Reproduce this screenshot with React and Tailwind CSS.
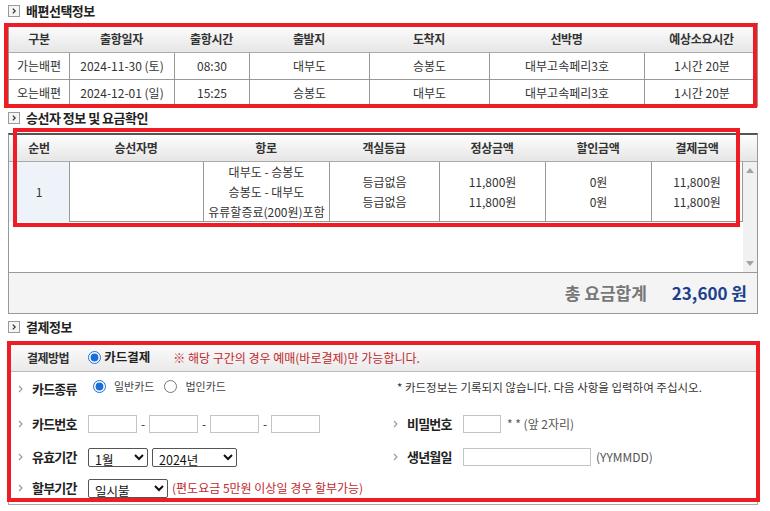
import React from 'react';

const trips = [
  ['가는배편', '2024-11-30 (토)', '08:30', '대부도', '승봉도', '대부고속페리3호', '1시간 20분'],
  ['오는배편', '2024-12-01 (일)', '15:25', '승봉도', '대부도', '대부고속페리3호', '1시간 20분'],
];

const tripHeads = ['구분', '출항일자', '출항시간', '출발지', '도착지', '선박명', '예상소요시간'];
const fareHeads = ['순번', '승선자명', '항로', '객실등급', '정상금액', '할인금액', '결제금액'];

function BoxIcon() {
  return (
    <svg width="12" height="12" viewBox="0 0 12 12">
      <rect x="0.5" y="0.5" width="11" height="11" fill="#f5f5f5" stroke="#9a9a9a" />
      <path d="M4.8 3.6 L7.2 6 L4.8 8.4" fill="none" stroke="#333" strokeWidth="1.2" />
    </svg>
  );
}

function SectionTitle({ children, className = '' }) {
  return (
    <div className={`flex items-center gap-[6px] pl-[8px] ${className}`}>
      <BoxIcon />
      <span className="text-[13px] font-bold text-[#222] tracking-[-0.5px]">{children}</span>
    </div>
  );
}

function RowMark() {
  return (
    <svg width="5" height="8" viewBox="0 0 5 8" className="shrink-0">
      <path d="M1 1 L4 4 L1 7" fill="none" stroke="#999" strokeWidth="1.1" />
    </svg>
  );
}

function Label({ children }) {
  return (
    <div className="flex items-center w-[70px] shrink-0">
      <RowMark />
      <span className="ml-[9px] text-[13px] font-bold text-[#222] tracking-[-0.8px]">{children}</span>
    </div>
  );
}

function TextBox({ w }) {
  return <input type="text" className={`${w} h-[18px] border border-[#c4c4c4] bg-white outline-none`} />;
}

function Select({ w, className = '', children }) {
  return (
    <select className={`${w} ${className} h-[19px] border border-[#555] rounded-[2px] bg-white text-[12.5px] leading-none py-0 pl-[2px] text-[#111]`}>
      <option>{children}</option>
    </select>
  );
}

export default function App() {
  return (
    <div className="relative w-[770px] h-[511px] overflow-hidden bg-white text-[#333] font-['Noto_Sans_CJK_KR','Noto_Sans',sans-serif]">
      {/* 배편선택정보 */}
      <SectionTitle className="h-[21px]">배편선택정보</SectionTitle>
      <div className="ml-[8px] mt-[2px] w-[750px] border-t-2 border-[#555] border-x border-x-[#999] text-[12px]">
        <div className="grid grid-cols-[60px_105px_75px_120px_120px_155px_115px] h-[28px] border-b border-[#aaa] bg-gradient-to-b from-[#fdfdfd] to-[#e6e6e6] font-bold">
          {tripHeads.map((h) => (
            <div key={h} className="flex items-center justify-center tracking-[-0.3px]">{h}</div>
          ))}
        </div>
        {trips.map((row) => (
          <div key={row[0]} className="grid grid-cols-[60px_105px_75px_120px_120px_155px_115px] h-[27px] border-b border-[#999]">
            {row.map((c, i) => (
              <div key={i} className={`flex items-center justify-center ${i > 0 ? 'border-l border-[#999]' : ''}`}>{c}</div>
            ))}
          </div>
        ))}
      </div>

      {/* 승선자 정보 및 요금확인 */}
      <SectionTitle className="h-[22px]">승선자 정보 및 요금확인</SectionTitle>
      <div className="ml-[8px] mt-[4px] w-[750px] border-t-2 border-[#555] border-x border-x-[#999] text-[12px]">
        <div className="grid grid-cols-[60px_134px_126px_110px_106px_106px_92px_16px] h-[27px] border-b border-[#aaa] bg-gradient-to-b from-[#fdfdfd] to-[#e6e6e6] font-bold">
          {fareHeads.map((h) => (
            <div key={h} className="flex items-center justify-center tracking-[-0.3px]">{h}</div>
          ))}
          <div />
        </div>
        <div className="flex h-[110px]">
          <div className="w-[734px]">
            <div className="grid grid-cols-[60px_134px_126px_110px_106px_106px_92px] h-[60px] border-b border-[#999] leading-[20px]">
              <div className="flex items-center justify-center bg-[#eef3fa]">1</div>
              <div className="border-l border-[#999]" />
              <div className="flex flex-col items-center justify-center border-l border-[#999]">
                <span>대부도 - 승봉도</span>
                <span>승봉도 - 대부도</span>
                <span>유류할증료(200원)포함</span>
              </div>
              <div className="flex flex-col items-center justify-center border-l border-[#999]">
                <span>등급없음</span>
                <span>등급없음</span>
              </div>
              <div className="flex flex-col items-center justify-center border-l border-[#999]">
                <span>11,800원</span>
                <span>11,800원</span>
              </div>
              <div className="flex flex-col items-center justify-center border-l border-[#999]">
                <span>0원</span>
                <span>0원</span>
              </div>
              <div className="flex flex-col items-center justify-center border-x border-[#999]">
                <span>11,800원</span>
                <span>11,800원</span>
              </div>
            </div>
          </div>
          {/* scrollbar */}
          <div className="w-[16px] bg-[#f1f1f1] flex flex-col justify-between items-center py-[6px]">
            <svg width="8" height="5" viewBox="0 0 8 5"><path d="M0 5 L4 0 L8 5 Z" fill="#a3a3a3" /></svg>
            <svg width="8" height="5" viewBox="0 0 8 5"><path d="M0 0 L4 5 L8 0 Z" fill="#a3a3a3" /></svg>
          </div>
        </div>
        <div className="flex items-center justify-end h-[42px] border-y border-[#999] bg-[#f4f4f4] pr-[10px] text-[17px] font-bold">
          <span className="text-[#777]">총 요금합계</span>
          <span className="ml-[25px] text-[#1d3f8f]">23,600 원</span>
        </div>
      </div>

      {/* 결제정보 */}
      <SectionTitle className="h-[26px]">결제정보</SectionTitle>
      <div className="ml-[8px] mt-[3px] w-[750px] border border-[#aaa] text-[12px]">
        <div className="flex items-center h-[28px] border-b border-[#bbb] bg-gradient-to-b from-[#fbfbfb] to-[#eaeaea] pl-[18px]">
          <span className="font-bold tracking-[-0.5px]">결제방법</span>
          <input type="radio" defaultChecked name="pay" className="ml-[19px] w-[13px] h-[13px] m-0 accent-[#1a6fd6]" />
          <span className="ml-[3px] text-[12.5px] font-bold text-[#222]">카드결제</span>
          <span className="ml-[23px] text-[#c0282d]">※ 해당 구간의 경우 예매(바로결제)만 가능합니다.</span>
        </div>

        <div className="flex h-[34px] items-center">
          <div className="flex items-center w-[376px] pl-[9px]">
            <Label>카드종류</Label>
            <input type="radio" defaultChecked name="ctype" className="ml-[5px] -mt-[5px] w-[13px] h-[13px] m-0 accent-[#1a6fd6]" />
            <span className="ml-[8px] -mt-[5px] text-[11px] text-[#444]">일반카드</span>
            <input type="radio" name="ctype" className="ml-[10px] -mt-[5px] w-[13px] h-[13px] m-0" />
            <span className="ml-[8px] -mt-[5px] text-[11px] text-[#444]">법인카드</span>
          </div>
          <div className="pl-[12px] -mt-[3px] text-[11.5px] text-[#333]">* 카드정보는 기록되지 않습니다. 다음 사항을 입력하여 주십시오.</div>
        </div>

        <div className="flex h-[36px] items-center">
          <div className="flex items-center w-[376px] pl-[9px]">
            <Label>카드번호</Label>
            <TextBox w="w-[49px]" />
            <span className="w-[12px] text-center">-</span>
            <TextBox w="w-[49px]" />
            <span className="w-[12px] text-center">-</span>
            <TextBox w="w-[49px]" />
            <span className="w-[12px] text-center">-</span>
            <TextBox w="w-[49px]" />
          </div>
          <div className="flex items-center pl-[8px]">
            <Label>비밀번호</Label>
            <TextBox w="w-[38px]" />
            <span className="ml-[6px] text-[#555]">* * (앞 2자리)</span>
          </div>
        </div>

        <div className="flex h-[30px] items-center">
          <div className="flex items-center w-[376px] pl-[9px]">
            <Label>유효기간</Label>
            <Select w="w-[60px]">1월</Select>
            <Select w="w-[85px]" className="ml-[4px]">2024년</Select>
          </div>
          <div className="flex items-center pl-[8px]">
            <Label>생년월일</Label>
            <TextBox w="w-[128px]" />
            <span className="ml-[5px] text-[#555]">(YYMMDD)</span>
          </div>
        </div>

        <div className="flex h-[32px] items-center">
          <div className="flex items-center pl-[9px]">
            <Label>할부기간</Label>
            <Select w="w-[80px]">일시불</Select>
            <span className="ml-[4px] text-[#c0282d]">(편도요금 5만원 이상일 경우 할부가능)</span>
          </div>
        </div>
      </div>

      {/* annotation boxes */}
      <div className="pointer-events-none absolute left-[4px] top-[23px] w-[753px] h-[85px] border-[4px] border-[#ee1c25]" />
      <div className="pointer-events-none absolute left-[13px] top-[128px] w-[727px] h-[99px] border-[4px] border-[#ee1c25]" />
      <div className="pointer-events-none absolute left-[7px] top-[341px] w-[753px] h-[161px] border-[4px] border-[#ee1c25]" />
    </div>
  );
}
